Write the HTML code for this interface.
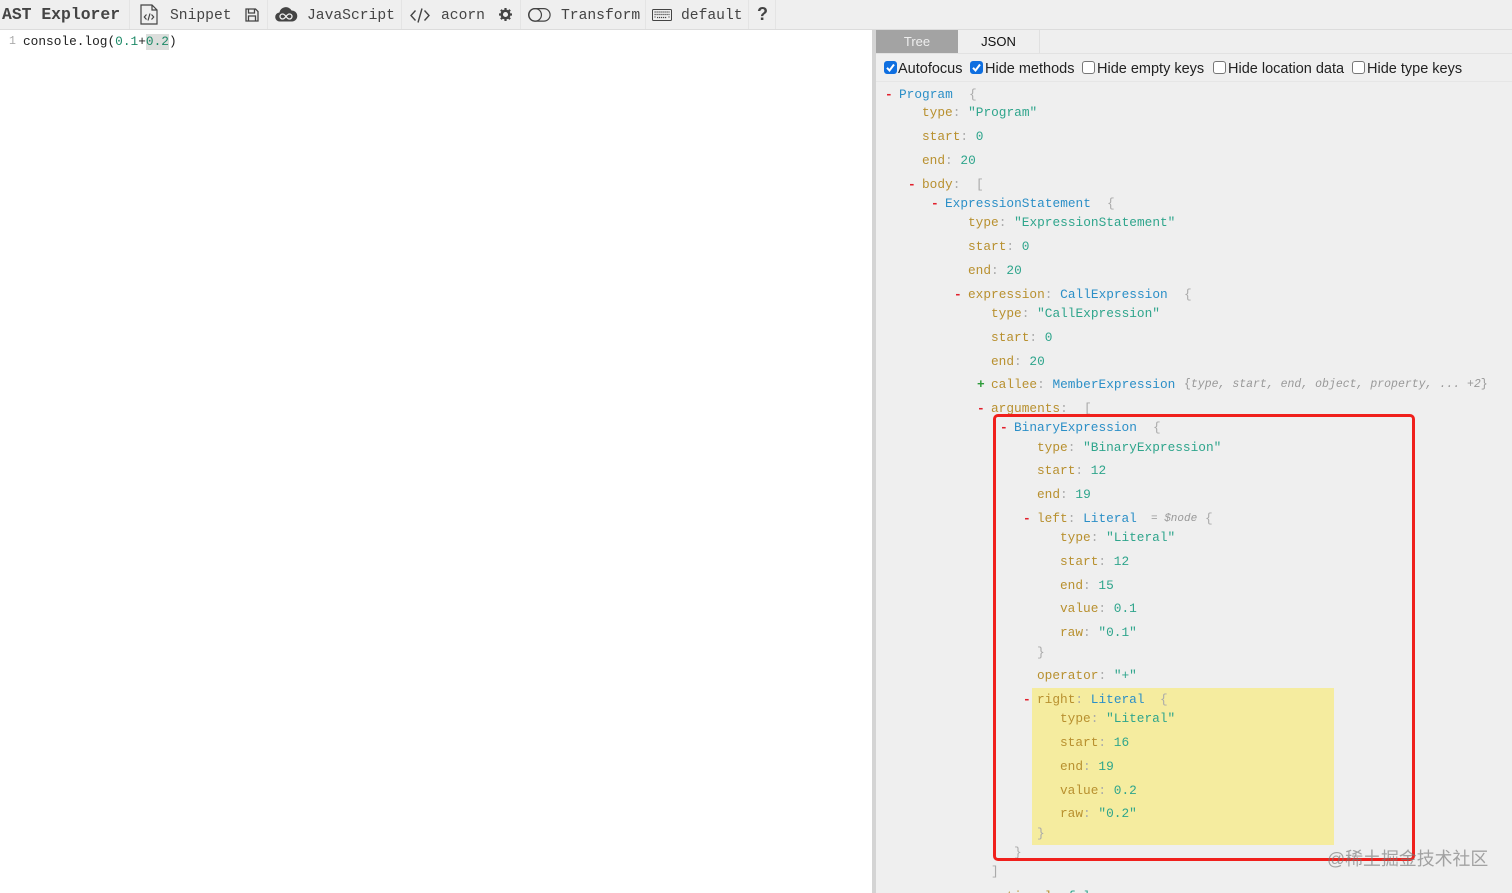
<!DOCTYPE html>
<html lang="en"><head><meta charset="utf-8"><title>AST Explorer</title>
<style>
html,body{margin:0;padding:0;width:1512px;height:893px;overflow:hidden;background:#fff}
#w{position:absolute;left:0;top:0;width:1512px;height:893px;overflow:hidden}
#t{position:absolute;left:0;top:0;width:1512px;height:29px;background:#efefef;border-bottom:1px solid #dcdcdc}
.s{position:absolute;top:0;width:1px;height:29px;background:#e4e4e4}
.b{position:absolute;top:7px;font:14.67px/18px "Liberation Mono",monospace;color:#444;white-space:pre}
svg{position:absolute;overflow:visible}
#p{position:absolute;left:873px;top:30px;width:639px;height:863px;background:#efefef}
#d{position:absolute;left:872px;top:30px;width:4px;height:863px;background:#d4d4d4}
.m,.k,.n,.v,.g,.c,.r,.a{position:absolute;font:12.8px/16px "Liberation Mono",monospace;white-space:pre;letter-spacing:0}
.k,.n,.v,.g,.c,.r,.a{margin-top:1px}
.k .g,.k .v,.k .n{position:static;margin:0}
.k{color:#b8902f}.n{color:#2b8fc7}.v{color:#2fa58c}.g{color:#aaa}.c{color:#999;font-style:italic;font-size:11.5px}.r{color:#e2202c;font-weight:bold}.a{color:#2d9b3a;font-weight:bold}
.cb{position:absolute;top:61px;width:11px;height:11px;border:1px solid #777;border-radius:3px;background:#fff}
.cb.on{background:#0f6fe0;border-color:#0f6fe0}
.cl{position:absolute;top:61px;font:14.5px/17px "Liberation Sans",sans-serif;color:#222;white-space:pre}
</style></head><body><div id="w">
<div id="t"></div>
<div class="s" style="left:129px"></div><div class="s" style="left:267px"></div><div class="s" style="left:401px"></div><div class="s" style="left:520px"></div><div class="s" style="left:645px"></div><div class="s" style="left:748px"></div><div class="s" style="left:775px"></div>
<div class="b" style="left:2px;top:6px;font-size:16.4px;font-weight:bold;color:#444">AST Explorer</div>
<svg style="left:140px;top:4px" width="18" height="21" viewBox="0 0 18 21" fill="none" stroke="#444" stroke-width="1.2"><path d="M1 1h11l5 5v14H1zM12 1v5h5"/><path d="M6.500 10.500l-2.200 2.500 2.200 2.500M11.500 10.500l2.200 2.500-2.200 2.500M10 9.500l-2 7"/></svg>
<div class="b" style="left:170px">Snippet</div>
<svg style="left:245px;top:8px" width="14" height="14" viewBox="0 0 14 14" fill="none" stroke="#444" stroke-width="1.3"><path d="M1 1h9.500L13 3.500V13H1zM3.500 1v4h6V1M3.500 13V8h7v5"/></svg>
<svg style="left:275px;top:6px" width="22" height="16" viewBox="0 0 22 16"><path d="M5 15.500a4.500 4.500 0 0 1-.6-9A6.500 6.500 0 0 1 16.500 4.500 5.500 5.500 0 0 1 17 15.500z" fill="#444"/><path d="M11 10.500c-1.500-2-2.200-2.500-3.500-2.500a2.500 2.500 0 0 0 0 5c1.300 0 2-.5 3.500-2.500s2.200-2.500 3.500-2.500a2.500 2.500 0 0 1 0 5c-1.300 0-2-.5-3.500-2.500z" fill="none" stroke="#efefef" stroke-width="1.300"/></svg>
<div class="b" style="left:307px">JavaScript</div>
<svg style="left:410px;top:8px" width="20" height="15" viewBox="0 0 20 15" fill="none" stroke="#444" stroke-width="1.400"><path d="M5.500 2.500L1 7.500l4.500 5M14.500 2.500l4.500 5-4.500 5M12 .5L8 14.500"/></svg>
<div class="b" style="left:441px">acorn</div>
<svg style="left:499px;top:8px" width="13" height="13" viewBox="0 0 13 13"><circle cx="6.500" cy="6.500" r="3.800" fill="none" stroke="#444" stroke-width="2.500"/><path d="M6.500 0v13M0 6.500h13M1.900 1.900l9.200 9.200M11.100 1.900l-9.200 9.200" stroke="#444" stroke-width="2.200" stroke-dasharray="2.300 8.400 2.300 0"/></svg>
<svg style="left:528px;top:8px" width="23" height="14" viewBox="0 0 23 14" fill="none" stroke="#444" stroke-width="1.200"><rect x=".6" y=".6" width="21.500" height="12.500" rx="6.250"/><circle cx="7.200" cy="6.850" r="6.250"/></svg>
<div class="b" style="left:561px">Transform</div>
<svg style="left:652px;top:9px" width="20" height="12" viewBox="0 0 20 12" fill="none" stroke="#444"><rect x=".5" y=".5" width="19" height="11" rx="1"/><path d="M2.500 3h15M2.500 5.500h15M2.500 8h1M5 8.500h10M16.500 8h1" stroke-dasharray="1.200 .8" stroke-width="1.300"/></svg>
<div class="b" style="left:681px">default</div>
<div class="b" style="left:757px;top:5px;font:bold 18px/19px 'Liberation Sans',sans-serif;color:#444">?</div>

<div class="m" style="left:9px;top:34px;color:#aaa;font-size:11.5px">1</div>
<div style="position:absolute;left:146px;top:34px;width:23px;height:16px;background:#dcdedc"></div>
<div class="m" style="left:23px;top:34px;color:#222">console.log(<span style="color:#1e8a68">0.1</span>+<span style="color:#1e8a68">0.2</span>)</div>

<div id="p"></div><div id="d"></div>
<div style="position:absolute;left:876px;top:53px;width:636px;height:1px;background:#e2e2e2"></div>
<div style="position:absolute;left:876px;top:81px;width:636px;height:1px;background:#e6e6e6"></div>
<div style="position:absolute;left:876px;top:30px;width:82px;height:23px;background:#a3a3a3;color:#eee;font:13px/23px 'Liberation Sans',sans-serif;text-align:center">Tree</div>
<div style="position:absolute;left:958px;top:30px;width:81px;height:23px;border-right:1px solid #e0e0e0;color:#111;font:13px/23px 'Liberation Sans',sans-serif;text-align:center">JSON</div>

<span class="cb on" style="left:884px"><svg style="left:1px;top:1px" width="9" height="9" viewBox="0 0 9 9"><path d="M1 4.800l2.500 2.700L8 1.500" fill="none" stroke="#fff" stroke-width="2"/></svg></span><div class="cl" style="left:898px">Autofocus</div>
<span class="cb on" style="left:970px"><svg style="left:1px;top:1px" width="9" height="9" viewBox="0 0 9 9"><path d="M1 4.800l2.500 2.700L8 1.500" fill="none" stroke="#fff" stroke-width="2"/></svg></span><div class="cl" style="left:985px">Hide methods</div>
<span class="cb" style="left:1082px"></span><div class="cl" style="left:1097px">Hide empty keys</div>
<span class="cb" style="left:1213px"></span><div class="cl" style="left:1228px">Hide location data</div>
<span class="cb" style="left:1352px"></span><div class="cl" style="left:1367px">Hide type keys</div>

<div style="position:absolute;left:1032px;top:688px;width:302px;height:157px;background:#f5ec9f"></div>

<div class="r" style="left:885px;top:86px">-</div><div class="n" style="left:899px;top:86px">Program</div><div class="g" style="left:969px;top:86px">{</div>
<div class="k" style="left:922px;top:104px">type<span class="g">:</span> <span class="v">"Program"</span></div>
<div class="k" style="left:922px;top:128px">start<span class="g">:</span> <span class="v">0</span></div>
<div class="k" style="left:922px;top:152px">end<span class="g">:</span> <span class="v">20</span></div>
<div class="r" style="left:908px;top:176px">-</div><div class="k" style="left:922px;top:176px">body<span class="g">:</span></div><div class="g" style="left:976px;top:176px">[</div>
<div class="r" style="left:931px;top:195px">-</div><div class="n" style="left:945px;top:195px">ExpressionStatement</div><div class="g" style="left:1107px;top:195px">{</div>
<div class="k" style="left:968px;top:214px">type<span class="g">:</span> <span class="v">"ExpressionStatement"</span></div>
<div class="k" style="left:968px;top:238px">start<span class="g">:</span> <span class="v">0</span></div>
<div class="k" style="left:968px;top:262px">end<span class="g">:</span> <span class="v">20</span></div>
<div class="r" style="left:954px;top:286px">-</div><div class="k" style="left:968px;top:286px">expression<span class="g">:</span> <span class="n">CallExpression</span></div><div class="g" style="left:1184px;top:286px">{</div>
<div class="k" style="left:991px;top:305px">type<span class="g">:</span> <span class="v">"CallExpression"</span></div>
<div class="k" style="left:991px;top:329px">start<span class="g">:</span> <span class="v">0</span></div>
<div class="k" style="left:991px;top:353px">end<span class="g">:</span> <span class="v">20</span></div>
<div class="a" style="left:977px;top:376px">+</div><div class="k" style="left:991px;top:376px">callee<span class="g">:</span> <span class="n">MemberExpression</span></div><div class="c" style="left:1184px;top:376px"><span style="font-style:normal">{</span>type, start, end, object, property, ... +2<span style="font-style:normal">}</span></div>
<div class="r" style="left:977px;top:400px">-</div>
<div style="position:absolute;left:985px;top:400px;width:110px;height:14px;overflow:hidden"><div class="k" style="left:6px;top:0">arguments<span class="g">:</span></div><div class="g" style="left:99px;top:0">[</div></div>
<div class="r" style="left:1000px;top:419px">-</div><div class="n" style="left:1014px;top:419px">BinaryExpression</div><div class="g" style="left:1153px;top:419px">{</div>
<div class="k" style="left:1037px;top:439px">type<span class="g">:</span> <span class="v">"BinaryExpression"</span></div>
<div class="k" style="left:1037px;top:462px">start<span class="g">:</span> <span class="v">12</span></div>
<div class="k" style="left:1037px;top:486px">end<span class="g">:</span> <span class="v">19</span></div>
<div class="r" style="left:1023px;top:510px">-</div><div class="k" style="left:1037px;top:510px">left<span class="g">:</span> <span class="n">Literal</span></div><div class="c" style="left:1151px;top:510px;font-size:11px"><span style="font-style:normal">=</span> $node</div><div class="g" style="left:1205px;top:510px">{</div>
<div class="k" style="left:1060px;top:529px">type<span class="g">:</span> <span class="v">"Literal"</span></div>
<div class="k" style="left:1060px;top:553px">start<span class="g">:</span> <span class="v">12</span></div>
<div class="k" style="left:1060px;top:577px">end<span class="g">:</span> <span class="v">15</span></div>
<div class="k" style="left:1060px;top:600px">value<span class="g">:</span> <span class="v">0.1</span></div>
<div class="k" style="left:1060px;top:624px">raw<span class="g">:</span> <span class="v">"0.1"</span></div>
<div class="g" style="left:1037px;top:644px">}</div>
<div class="k" style="left:1037px;top:667px">operator<span class="g">:</span> <span class="v">"+"</span></div>
<div class="r" style="left:1023px;top:691px">-</div><div class="k" style="left:1037px;top:691px">right<span class="g">:</span> <span class="n">Literal</span></div><div class="g" style="left:1160px;top:691px">{</div>
<div class="k" style="left:1060px;top:710px">type<span class="g">:</span> <span class="v">"Literal"</span></div>
<div class="k" style="left:1060px;top:734px">start<span class="g">:</span> <span class="v">16</span></div>
<div class="k" style="left:1060px;top:758px">end<span class="g">:</span> <span class="v">19</span></div>
<div class="k" style="left:1060px;top:782px">value<span class="g">:</span> <span class="v">0.2</span></div>
<div class="k" style="left:1060px;top:805px">raw<span class="g">:</span> <span class="v">"0.2"</span></div>
<div class="g" style="left:1037px;top:825px">}</div>
<div class="g" style="left:1014px;top:844px">}</div>
<div class="g" style="left:991px;top:863px">]</div>
<div class="k" style="left:991px;top:888px">optional<span class="g">:</span> <span class="v">false</span></div>

<div style="position:absolute;left:993px;top:414px;width:416px;height:441px;border:3px solid #f0201c;border-radius:5px"></div>
<div style="position:absolute;left:1327px;top:849px;font:17.900px/21px 'Liberation Sans','Noto Sans CJK SC',sans-serif;color:rgba(120,120,120,.65);white-space:pre">@稀土掘金技术社区</div>
</div></body></html>
